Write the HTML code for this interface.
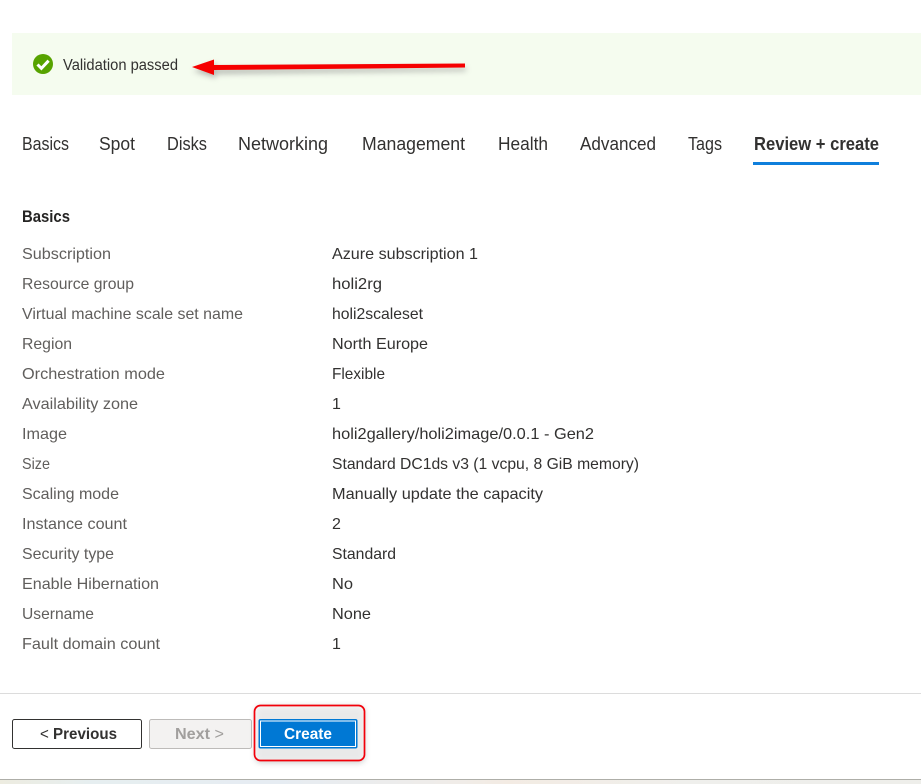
<!DOCTYPE html>
<html lang="en">
<head>
<meta charset="utf-8">
<title>Review + create</title>
<style>
html,body{margin:0;padding:0;background:#fff;width:921px;height:784px;overflow:hidden}
svg{display:block;font-family:"Liberation Sans",sans-serif}
.k{font-size:16px;fill:#605e5c}
.v{font-size:16px;fill:#323130}
.t{font-size:18.5px;fill:#323130}
.h{font-size:17px;font-weight:bold;fill:#252423}
.b{font-size:15.5px;font-weight:bold}
</style>
</head>
<body>
<svg width="921" height="784" viewBox="0 0 921 784" xmlns="http://www.w3.org/2000/svg">
<defs>
<linearGradient id="strip" x1="0" x2="1" y1="0" y2="0">
<stop offset="0" stop-color="#edece0"/><stop offset=".1" stop-color="#e6eef0"/><stop offset=".3" stop-color="#e6ecf2"/><stop offset=".5" stop-color="#f0ece8"/><stop offset=".55" stop-color="#f3ebe3"/><stop offset=".75" stop-color="#efefec"/><stop offset="1" stop-color="#eeeeea"/>
</linearGradient>
<filter id="sh" x="-20%" y="-60%" width="140%" height="240%"><feGaussianBlur stdDeviation="3"/></filter>
</defs>

<rect x="12" y="33" width="909" height="62" fill="#f5fcef"/>
<circle cx="43" cy="64" r="10" fill="#57a300"/>
<path d="M37.500 64.500l3.900 3.900 7.200-7.700" fill="none" stroke="#fff" stroke-width="3"/>
<text x="63" y="70" class="v" textLength="115" lengthAdjust="spacingAndGlyphs" style="font-size:15.5px">Validation passed</text>

<path d="M192 68L215 60V65.500L465 64.500V68L215 71V75Z" fill="#777" opacity=".5" filter="url(#sh)" transform="translate(1 3)"/>
<path d="M192 67L214 59.500V65L465 63.500V67.500L214 70V75Z" fill="#f60000"/>

<text x="22" y="150" class="t" textLength="47" lengthAdjust="spacingAndGlyphs">Basics</text>
<text x="99" y="150" class="t" textLength="36" lengthAdjust="spacingAndGlyphs">Spot</text>
<text x="167" y="150" class="t" textLength="40" lengthAdjust="spacingAndGlyphs">Disks</text>
<text x="238" y="150" class="t" textLength="90" lengthAdjust="spacingAndGlyphs">Networking</text>
<text x="362" y="150" class="t" textLength="103" lengthAdjust="spacingAndGlyphs">Management</text>
<text x="498" y="150" class="t" textLength="50" lengthAdjust="spacingAndGlyphs">Health</text>
<text x="580" y="150" class="t" textLength="76" lengthAdjust="spacingAndGlyphs">Advanced</text>
<text x="688" y="150" class="t" textLength="34" lengthAdjust="spacingAndGlyphs">Tags</text>
<text x="754" y="150" class="t" font-weight="bold" textLength="125" lengthAdjust="spacingAndGlyphs">Review + create</text>
<rect x="753" y="162" width="126" height="3" fill="#0f7fdc"/>

<text x="22" y="222" class="h" textLength="48" lengthAdjust="spacingAndGlyphs">Basics</text>

<text x="22" y="259" class="k" textLength="89" lengthAdjust="spacingAndGlyphs">Subscription</text>
<text x="22" y="289" class="k" textLength="112" lengthAdjust="spacingAndGlyphs">Resource group</text>
<text x="22" y="319" class="k" textLength="221" lengthAdjust="spacingAndGlyphs">Virtual machine scale set name</text>
<text x="22" y="349" class="k" textLength="50" lengthAdjust="spacingAndGlyphs">Region</text>
<text x="22" y="379" class="k" textLength="143" lengthAdjust="spacingAndGlyphs">Orchestration mode</text>
<text x="22" y="409" class="k" textLength="116" lengthAdjust="spacingAndGlyphs">Availability zone</text>
<text x="22" y="439" class="k" textLength="45" lengthAdjust="spacingAndGlyphs">Image</text>
<text x="22" y="469" class="k" textLength="28" lengthAdjust="spacingAndGlyphs">Size</text>
<text x="22" y="499" class="k" textLength="97" lengthAdjust="spacingAndGlyphs">Scaling mode</text>
<text x="22" y="529" class="k" textLength="105" lengthAdjust="spacingAndGlyphs">Instance count</text>
<text x="22" y="559" class="k" textLength="92" lengthAdjust="spacingAndGlyphs">Security type</text>
<text x="22" y="589" class="k" textLength="137" lengthAdjust="spacingAndGlyphs">Enable Hibernation</text>
<text x="22" y="619" class="k" textLength="72" lengthAdjust="spacingAndGlyphs">Username</text>
<text x="22" y="649" class="k" textLength="138" lengthAdjust="spacingAndGlyphs">Fault domain count</text>

<text x="332" y="259" class="v" textLength="146" lengthAdjust="spacingAndGlyphs">Azure subscription 1</text>
<text x="332" y="289" class="v" textLength="50" lengthAdjust="spacingAndGlyphs">holi2rg</text>
<text x="332" y="319" class="v" textLength="91" lengthAdjust="spacingAndGlyphs">holi2scaleset</text>
<text x="332" y="349" class="v" textLength="96" lengthAdjust="spacingAndGlyphs">North Europe</text>
<text x="332" y="379" class="v" textLength="53" lengthAdjust="spacingAndGlyphs">Flexible</text>
<text x="332" y="409" class="v">1</text>
<text x="332" y="439" class="v" textLength="262" lengthAdjust="spacingAndGlyphs">holi2gallery/holi2image/0.0.1 - Gen2</text>
<text x="332" y="469" class="v" textLength="307" lengthAdjust="spacingAndGlyphs">Standard DC1ds v3 (1 vcpu, 8 GiB memory)</text>
<text x="332" y="499" class="v" textLength="211" lengthAdjust="spacingAndGlyphs">Manually update the capacity</text>
<text x="332" y="529" class="v">2</text>
<text x="332" y="559" class="v" textLength="64" lengthAdjust="spacingAndGlyphs">Standard</text>
<text x="332" y="589" class="v" textLength="21" lengthAdjust="spacingAndGlyphs">No</text>
<text x="332" y="619" class="v" textLength="39" lengthAdjust="spacingAndGlyphs">None</text>
<text x="332" y="649" class="v">1</text>

<rect x="0" y="693" width="921" height="1" fill="#dcdcdc"/>

<rect x="12.500" y="719.500" width="129" height="29" rx="2" fill="#fff" stroke="#323130"/>
<text x="40" y="739" class="b" fill="#323130" textLength="77" lengthAdjust="spacingAndGlyphs"><tspan font-weight="normal">&lt;</tspan> Previous</text>

<rect x="149.500" y="719.500" width="102" height="29" rx="2" fill="#f3f2f1" stroke="#bdbbb9"/>
<text x="175" y="739" class="b" fill="#a19f9d" textLength="49" lengthAdjust="spacingAndGlyphs">Next <tspan font-weight="normal">&gt;</tspan></text>

<rect x="255" y="706" width="110" height="57" rx="6" fill="#8a8a8a" opacity=".4" filter="url(#sh)"/>
<rect x="255" y="706" width="109" height="55" rx="6" fill="#fff" opacity=".55"/>
<rect x="254.500" y="705.500" width="110" height="55" rx="6" fill="none" stroke="#f2000a" stroke-width="1.700"/>
<rect x="258.500" y="719" width="99" height="29.500" rx="2" fill="#0078d4"/>
<rect x="260.500" y="721" width="95" height="25.500" fill="none" stroke="#fff" stroke-width="1"/>
<text x="284" y="739" class="b" fill="#fff" textLength="48" lengthAdjust="spacingAndGlyphs">Create</text>

<rect x="0" y="780" width="921" height="4" fill="url(#strip)"/>
<rect x="0" y="779" width="921" height="1" fill="#aeaea8"/>
</svg>
</body>
</html>
